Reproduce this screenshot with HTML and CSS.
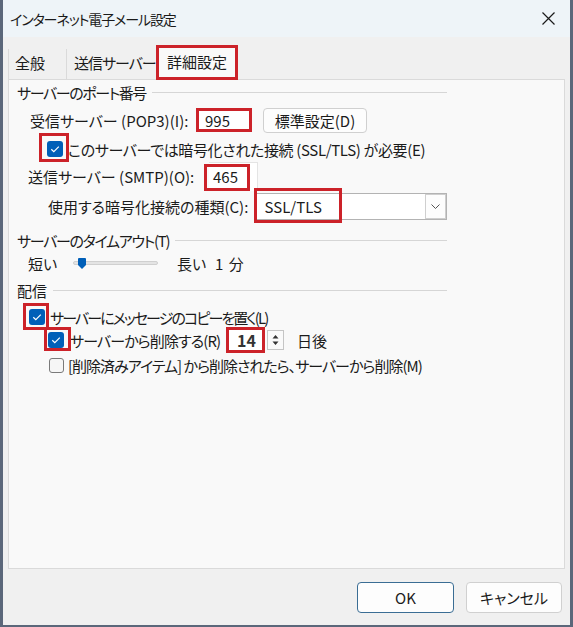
FILE: index.html
```html
<!DOCTYPE html>
<html lang="ja">
<head>
<meta charset="utf-8">
<title>インターネット電子メール設定</title>
<link rel="stylesheet" href="styles.css">
</head>
<body>
<div class="window">
  <div class="titlebar">
    <span class="title">インターネット電子メール設定</span>
    <svg class="close" width="13" height="13" viewBox="0 0 13 13"><path d="M0.5 0.5 L12.5 12.5 M12.5 0.5 L0.5 12.5" stroke="#1a1a1a" stroke-width="1.2" fill="none"/></svg>
  </div>
  <div class="tabs">
    <div class="tab tab-general">全般</div>
    <div class="tab tab-smtp">送信サーバー</div>
    <div class="tab tab-active">詳細設定</div>
  </div>
  <div class="panel">
    <div class="content">
      <div class="group-head group-port"><span class="gh-text">サーバーのポート番号</span><span class="rule"></span></div>

      <div class="row row-pop">
        <span class="lbl lbl-pop">受信サーバー (POP3)(I):</span>
        <span class="field field-pop mark">995</span>
        <span class="btn btn-default">標準設定(D)</span>
      </div>

      <div class="row row-ssl">
        <span class="cb cb-on cb-ssl mark"><svg width="16" height="16" viewBox="0 0 16 16"><path d="M4.3 8.2 L6.8 10.6 L11.8 5.6" stroke="#fff" stroke-width="1.2" fill="none"/></svg></span>
        <span class="cb-text ssl-text">このサーバーでは暗号化された接続 (SSL/TLS) が必要(E)</span>
      </div>

      <div class="row row-smtp">
        <span class="lbl lbl-smtp">送信サーバー (SMTP)(O):</span>
        <span class="field field-smtp mark">465</span>
      </div>

      <div class="row row-enc">
        <span class="lbl lbl-enc">使用する暗号化接続の種類(C):</span>
        <span class="select mark">
          <span class="select-val">SSL/TLS</span>
          <span class="select-btn"><svg width="9" height="5" viewBox="0 0 9 5"><path d="M0.5 0.5 L4.5 4.5 L8.5 0.5" stroke="#555" stroke-width="1" fill="none"/></svg></span>
        </span>
      </div>

      <div class="group-head group-timeout"><span class="gh-text">サーバーのタイムアウト(T)</span><span class="rule"></span></div>

      <div class="row row-slider">
        <span class="lbl lbl-short">短い</span>
        <span class="track"><svg class="thumb" width="8" height="11" viewBox="0 0 8 11"><path d="M0 1 Q0 0 1 0 L7 0 Q8 0 8 1 L8 7 L4 11 L0 7 Z" fill="#005fb8"/></svg></span>
        <span class="lbl lbl-long">長い</span>
        <span class="lbl lbl-min">1 分</span>
      </div>

      <div class="group-head group-deliver"><span class="gh-text">配信</span><span class="rule"></span></div>

      <div class="row row-leave">
        <span class="cb cb-on cb-leave mark"><svg width="16" height="16" viewBox="0 0 16 16"><path d="M4.3 8.2 L6.8 10.6 L11.8 5.6" stroke="#fff" stroke-width="1.2" fill="none"/></svg></span>
        <span class="cb-text leave-text">サーバーにメッセージのコピーを置く(L)</span>
      </div>

      <div class="row row-del">
        <span class="cb cb-on cb-del mark"><svg width="16" height="16" viewBox="0 0 16 16"><path d="M4.3 8.2 L6.8 10.6 L11.8 5.6" stroke="#fff" stroke-width="1.2" fill="none"/></svg></span>
        <span class="cb-text del-text">サーバーから削除する(R)</span>
        <span class="field field-days mark">14</span>
        <span class="spin"><svg width="15" height="18" viewBox="0 0 15 18"><path d="M4.5 7.5 L10.5 7.5 L7.5 4 Z M4.5 10.5 L10.5 10.5 L7.5 14 Z" fill="#333"/></svg></span>
        <span class="lbl lbl-days">日後</span>
      </div>

      <div class="row row-trash">
        <span class="cb cb-off"></span>
        <span class="cb-text trash-text">[削除済みアイテム] から削除されたら、サーバーから削除(M)</span>
      </div>
    </div>
  </div>
  <div class="footer">
    <span class="btn btn-ok">OK</span>
    <span class="btn btn-cancel">キャンセル</span>
  </div>
</div>
</body>
</html>
```

FILE: styles.css
```css
* { box-sizing: border-box; margin: 0; padding: 0; }
html, body { width: 573px; height: 627px; overflow: hidden; }
body {
  font-family: "Noto Sans CJK JP", "Noto Sans", sans-serif;
  font-size: 15px;
  color: #1b1b1b;
  font-feature-settings: "palt";
  background: #5b677a;
}
.window {
  width: 573px;
  height: 627px;
  border-left: 3px solid #5b677a;
  border-right: 3px solid #5b677a;
  border-bottom: 2px solid #5b677a;
  background: #f0f0f0;
  display: flex;
  flex-direction: column;
}
.titlebar {
  height: 37px;
  flex: none;
  background: #eef4f8;
  display: flex;
  align-items: center;
  justify-content: space-between;
  padding: 0 15px 0 7px;
}
.title { font-size: 14px; letter-spacing: -1.1px; color: #1a1a1a; }

.tabs {
  display: flex;
  align-items: flex-end;
  height: 34px;
  margin-top: 9px;
  margin-bottom: -1px;
  padding-left: 5px;
  position: relative;
  z-index: 1;
}
.tab {
  height: 30px;
  margin-bottom: 1px;
  display: flex;
  align-items: center;
  padding-bottom: 3px;
  white-space: nowrap;
  border-right: 1px solid #dadada;
}
.tab-general { width: 59px; padding-left: 6px; border-left: 1px solid #dadada; }
.tab-smtp { width: 89px; padding-left: 7px; letter-spacing: -1px; border-right: none; }
.tab-active {
  width: 82px;
  height: 35px;
  margin-bottom: 0;
  padding-left: 8px;
  padding-bottom: 2px;
  background: #f9f9f9;
  border: 3px solid #cc2229;
}

.panel {
  height: 490px;
  flex: none;
  margin: 0 5px;
  background: #f9f9f9;
  border: 1px solid #dadada;
  padding: 2px 0 0 8px;
}
.content { width: 430px; }

.group-head {
  height: 20px;
  display: flex;
  align-items: center;
  white-space: nowrap;
}
.group-head .rule {
  flex: 1;
  height: 1px;
  background: #d6d6d6;
  margin-left: 6px;
}
.group-port { margin-bottom: 1px; }
.group-port .gh-text { letter-spacing: -1.4px; }
.group-timeout { margin-top: 9px; }
.group-timeout .gh-text { letter-spacing: -1.3px; }
.group-deliver { margin-top: 4px; }

.row { display: flex; align-items: center; }
.row-pop { height: 34px; }
.row-ssl { height: 24px; }
.row-smtp { height: 30px; }
.row-enc { height: 30px; }
.row-slider { height: 26px; }
.row-leave { height: 26px; margin-top: 4px; }
.row-del { height: 20px; }
.row-trash { height: 26px; margin-top: 2px; }

.lbl { white-space: nowrap; }
.lbl-pop { margin-left: 13px; width: 166px; }
.lbl-smtp { margin-left: 11px; width: 181px; }
.lbl-enc { margin-left: 31px; width: 207px; }
.lbl-short { margin-left: 11px; width: 45px; }
.lbl-long { margin-left: 19px; width: 38px; }
.lbl-min { word-spacing: 2px; }
.lbl-days { margin-left: 13px; }

.mark { position: relative; }
.mark::after {
  content: "";
  position: absolute;
  border: 3px solid #cc2229;
  pointer-events: none;
}

.field {
  background: #fff;
  display: flex;
  align-items: center;
}
.field-pop { width: 56px; height: 24px; padding-left: 9px; }
.field-pop::after { inset: 0; }
.field-smtp {
  width: 49px;
  height: 29px;
  padding-left: 4px;
  border-top: 1px solid #e4e4e4;
  border-right: 1px solid #e4e4e4;
}
.field-smtp::after { left: -5px; right: 7px; top: 1px; bottom: 0; }
.field-days {
  width: 39px;
  height: 26px;
  padding-left: 11px;
  font-size: 16px;
  font-weight: 700;
  color: #333;
}
.field-days::after { inset: 0; }

.btn {
  display: flex;
  align-items: center;
  justify-content: center;
  background: #fdfdfd;
  border: 1px solid #d0d0d0;
  border-radius: 4px;
}
.btn-default { width: 104px; height: 25px; margin-left: 11px; }

.cb {
  width: 16px;
  height: 16px;
  border-radius: 3px;
  flex: none;
  display: block;
}
.cb svg { display: block; }
.cb-on { background: #005fb8; }
.cb-off { width: 15px; height: 15px; border: 1px solid #7a7a7a; background: #f6f6f6; margin-left: 32px; }
.cb-ssl { margin-left: 30px; }
.cb-ssl::after { left: -8px; right: -6px; top: -8px; bottom: -5px; }
.cb-leave { margin-left: 12px; }
.cb-leave::after { left: -6px; right: -4px; top: -6px; bottom: -5px; }
.cb-del { margin-left: 31px; }
.cb-del::after { left: -4px; right: -7px; top: -5px; bottom: -3px; }
.cb-text { margin-left: 6px; white-space: nowrap; }
.ssl-text { margin-left: 5px; letter-spacing: -0.35px; }
.leave-text { margin-left: 5px; letter-spacing: -1.9px; }
.del-text { width: 156px; letter-spacing: -0.9px; }
.trash-text { margin-left: 4px; letter-spacing: -1px; }

.select {
  width: 193px;
  height: 27px;
  background: #fff;
  border: 1px solid #b3b3b3;
  display: flex;
  align-items: center;
  justify-content: space-between;
}
.select::after { left: -1px; top: -6px; bottom: -4px; width: 82px; }
.select-val { padding-left: 9px; }
.select-btn {
  width: 21px;
  height: 25px;
  border: 1px solid #cfcfcf;
  background: #fdfdfd;
  display: flex;
  align-items: center;
  justify-content: center;
}

.track {
  position: relative;
  width: 85px;
  height: 4px;
  background: #e4e4e4;
  border: 1px solid #d0d0d0;
  border-radius: 2px;
}
.thumb { position: absolute; left: 4px; top: -4px; }

.spin {
  width: 17px;
  height: 20px;
  margin-left: 2px;
  border: 1px solid #c5c5c5;
  background: #fafafa;
  display: flex;
  align-items: center;
  justify-content: center;
}

.footer {
  display: flex;
  justify-content: flex-end;
  gap: 12px;
  padding: 13px 8px 0 0;
}
.btn-ok { width: 97px; height: 31px; border-color: #3a6d94; }
.btn-cancel { width: 96px; height: 31px; }
```
